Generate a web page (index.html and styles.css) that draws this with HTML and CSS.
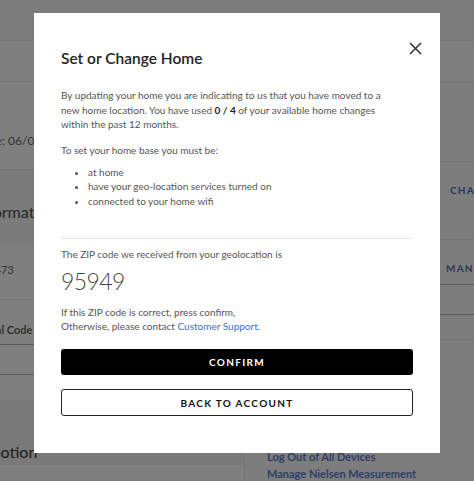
FILE: index.html
```html
<!DOCTYPE html>
<html lang="en">
<head>
<meta charset="utf-8">
<title>Set or Change Home</title>
<link rel="stylesheet" href="styles.css">
</head>
<body>
<div class="page">
  <header class="topbar"></header>
  <nav class="subnav"></nav>
  <div class="columns">
    <main class="main">
      <div class="row row-since"><span class="since">Since: 06/01/2021</span></div>
      <div class="section-head"><h2 class="sec-title">Information</h2></div>
      <div class="row row-id"><span class="value">ID 4473</span></div>
      <div class="row row-code"><span class="label">Postal Code</span></div>
      <div class="row row-dark"></div>
      <div class="row row-plain"></div>
      <div class="band"><h2 class="band-title">Promotion</h2></div>
    </main>
    <aside class="side">
      <div class="srow srow-top"></div>
      <div class="srow srow-change"><span class="slabel"></span><span class="action">CHANGE</span></div>
      <div class="srow srow-manage"><span class="slabel"></span><span class="action">MANAGE</span></div>
      <div class="srow srow-a"></div>
      <div class="srow srow-b"></div>
      <div class="links">
        <a class="link">Log Out of All Devices</a>
        <a class="link">Manage Nielsen Measurement</a>
      </div>
    </aside>
  </div>
</div>

<div class="overlay">
  <div class="modal" role="dialog" aria-labelledby="modal-title">
    <button class="close" aria-label="Close">
      <svg width="13" height="13" viewBox="0 0 13 13"><path d="M1 1 L12 12 M12 1 L1 12" stroke="#333" stroke-width="1.5" fill="none"/></svg>
    </button>
    <h1 class="title" id="modal-title">Set or Change Home</h1>
    <p class="text">By updating your home you are indicating to us that you have moved to a new home location. You have used <b>0 / 4</b> of your available home changes within the past 12 months.</p>
    <p class="text req">To set your home base you must be:</p>
    <ul class="list">
      <li>at home</li>
      <li>have your geo-location services turned on</li>
      <li>connected to your home wifi</li>
    </ul>
    <hr class="divider">
    <p class="text">The ZIP code we received from your geolocation is</p>
    <div class="zip">95949</div>
    <p class="text note">If this ZIP code is correct, press confirm,<br>Otherwise, please contact <a class="support">Customer Support</a>.</p>
    <button class="btn btn-primary">CONFIRM</button>
    <button class="btn btn-secondary">BACK TO ACCOUNT</button>
  </div>
</div>
</body>
</html>
```

FILE: styles.css
```css
html, body {
  margin: 0;
  padding: 0;
  height: 100%;
  overflow: hidden;
}
body {
  font-family: Lato, "Liberation Sans", sans-serif;
  background: #ffffff;
  color: #666;
}

/* background page */
.page {
  margin-left: -34px;
  width: 538px;
}
.topbar {
  height: 40px;
  border-bottom: 1px solid #e6e6e6;
  background: #f8f8f8;
}
.subnav {
  height: 40px;
  border-bottom: 1px solid #e6e6e6;
}
.columns {
  display: grid;
  grid-template-columns: 278px 1fr;
}
.main {
  display: flex;
  flex-direction: column;
}
.row {
  box-sizing: border-box;
  padding-left: 8px;
  border-bottom: 1px solid #e8e8e8;
  font-size: 11px;
  color: #666;
}
.row-since {
  height: 88px;
  padding-top: 51px;
  font-size: 12px;
}
.section-head {
  height: 75px;
  padding-left: 8px;
  box-sizing: border-box;
  padding-top: 32px;
  background: #f6f6f6;
}
.sec-title {
  margin: 0;
  font-size: 16px;
  font-weight: 500;
  color: #5a5a5a;
  line-height: 20px;
}
.row-id {
  height: 55px;
  padding-top: 18px;
}
.row-code {
  height: 45px;
  padding-top: 23px;
  border-bottom-color: #b8b8b8;
}
.label {
  font-weight: 700;
  color: #666;
}
.row-dark {
  height: 30px;
  border-bottom-color: #b8b8b8;
}
.row-plain {
  height: 25px;
  border-bottom: none;
}
.band {
  height: 65px;
  box-sizing: border-box;
  padding: 42px 0 0 8px;
  background: #f3f3f3;
}
.band-title {
  margin: 0;
  text-indent: -11px;
  font-size: 16px;
  font-weight: 500;
  line-height: 20px;
  color: #4a4a4a;
}
.side {
  border-left: 1px solid #e8e8e8;
  background: #fbfbfb;
}
.srow {
  box-sizing: border-box;
  display: flex;
  border-bottom: 1px solid #e8e8e8;
}
.slabel {
  width: 205px;
  flex: none;
}
.action {
  font-size: 10px;
  font-weight: 700;
  letter-spacing: 1.2px;
  color: #4f6fb8;
}
.srow-top { height: 80px; }
.srow-change { height: 78px; padding-top: 22px; }
.srow-manage { height: 45px; padding-top: 22px; border-bottom-color: #b8b8b8; }
.srow-manage .slabel { width: 201px; }
.srow-a { height: 30px; border-bottom-color: #b8b8b8; }
.srow-b { height: 25px; }
.links {
  display: flex;
  flex-direction: column;
  gap: 4px;
  padding: 110px 0 0 22px;
}
.link {
  font-size: 11px;
  font-weight: 700;
  line-height: 13px;
  color: #5a7fd0;
}

/* overlay + modal */
.overlay {
  position: fixed;
  inset: 0;
  background: rgba(0, 0, 0, 0.5);
  display: flex;
  justify-content: center;
  align-items: flex-start;
  padding-top: 13px;
}
.modal {
  position: relative;
  box-sizing: border-box;
  width: 406px;
  height: 440px;
  padding: 35px 27px 0;
  background: #ffffff;
  display: flex;
  flex-direction: column;
}
.close {
  position: absolute;
  top: 29px;
  right: 18px;
  width: 13px;
  height: 13px;
  padding: 0;
  border: none;
  background: none;
  display: flex;
}
.title {
  margin: 0 0 20px;
  font-size: 15.5px;
  font-weight: 600;
  line-height: 20px;
  color: #222;
}
.text {
  margin: 0;
  max-width: 338px;
  font-size: 10px;
  line-height: 14.5px;
  color: #555;
}
.text b {
  color: #222;
  font-weight: 700;
}
.req {
  margin-top: 11px;
}
.list {
  margin: 7.5px 0 0;
  padding-left: 27px;
  font-size: 10px;
  line-height: 14.5px;
  color: #555;
}
.divider {
  margin: 29.5px 0 8.5px;
  border: none;
  border-top: 1px solid #e6e6e6;
  height: 0;
}
.zip {
  margin-top: 5px;
  font-size: 23px;
  font-weight: 300;
  letter-spacing: -0.6px;
  line-height: 28px;
  color: #444;
}
.note {
  margin-top: 10px;
}
.support {
  color: #3b6fd2;
}
.btn {
  box-sizing: border-box;
  width: 100%;
  font-family: Lato, "Liberation Sans", sans-serif;
  font-size: 10px;
  font-weight: 700;
  letter-spacing: 1.3px;
  border-radius: 3px;
  padding: 0;
}
.btn-primary {
  margin-top: 15px;
  height: 26.5px;
  background: #000;
  color: #fff;
  border: none;
}
.btn-secondary {
  margin-top: 14px;
  height: 27px;
  background: #fff;
  color: #111;
  border: 1.5px solid #222;
}
```
